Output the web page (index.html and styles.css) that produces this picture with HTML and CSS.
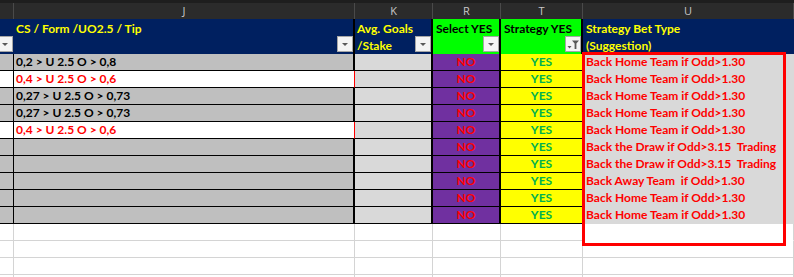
FILE: index.html
```html
<!DOCTYPE html>
<html lang="en">
<head>
    <meta charset="UTF-8">
    <title>Strategy Sheet</title>
    <link rel="stylesheet" href="styles.css">
</head>
<body>

<div class="sheet">
    <div class="topbar"></div>

    <!-- column letters -->
    <div class="row colhead">
        <div class="ch"></div>
        <div class="ch">J</div>
        <div class="ch">K</div>
        <div class="ch">R</div>
        <div class="ch">T</div>
        <div class="ch">U</div>
    </div>

    <!-- table header with filter buttons -->
    <div class="row head">
        <div class="hc navy first"><span class="filter"><svg width="14" height="14" viewBox="0 0 14 14"><path d="M4 6h6l-3 3z" fill="#595959"/></svg></span></div>
        <div class="hc navy thick">CS / Form /UO2.5 / Tip<span class="filter"><svg width="14" height="14" viewBox="0 0 14 14"><path d="M4 6h6l-3 3z" fill="#595959"/></svg></span></div>
        <div class="hc navy thick">Avg. Goals<br>/Stake<span class="filter"><svg width="14" height="14" viewBox="0 0 14 14"><path d="M4 6h6l-3 3z" fill="#595959"/></svg></span></div>
        <div class="hc green thick">Select YES<span class="filter"><svg width="14" height="14" viewBox="0 0 14 14"><path d="M4 6h6l-3 3z" fill="#595959"/></svg></span></div>
        <div class="hc green thick">Strategy YES<span class="filter"><svg width="14" height="14" viewBox="0 0 14 14"><path d="M1.5 9h4l-2 2.5z" fill="#595959"/><path d="M6 3.5h7l-2.6 3V12H8.6V6.5z" fill="#595959"/></svg></span></div>
        <div class="hc navy">Strategy Bet Type<br>(Suggestion)</div>
    </div>

    <!-- data rows -->
    <div class="row data">
        <div class="c idx"></div>
        <div class="c tip">0,2 &gt; U 2.5 O &gt; 0,8</div>
        <div class="c avg"></div>
        <div class="c sel">NO</div>
        <div class="c strat">YES</div>
        <div class="c bet">Back Home Team if Odd&gt;1.30</div>
    </div>
    <div class="row data alt">
        <div class="c idx"></div>
        <div class="c tip">0,4 &gt; U 2.5 O &gt; 0,6</div>
        <div class="c avg"></div>
        <div class="c sel">NO</div>
        <div class="c strat">YES</div>
        <div class="c bet">Back Home Team if Odd&gt;1.30</div>
    </div>
    <div class="row data">
        <div class="c idx"></div>
        <div class="c tip">0,27 &gt; U 2.5 O &gt; 0,73</div>
        <div class="c avg"></div>
        <div class="c sel">NO</div>
        <div class="c strat">YES</div>
        <div class="c bet">Back Home Team if Odd&gt;1.30</div>
    </div>
    <div class="row data">
        <div class="c idx"></div>
        <div class="c tip">0,27 &gt; U 2.5 O &gt; 0,73</div>
        <div class="c avg"></div>
        <div class="c sel">NO</div>
        <div class="c strat">YES</div>
        <div class="c bet">Back Home Team if Odd&gt;1.30</div>
    </div>
    <div class="row data alt">
        <div class="c idx"></div>
        <div class="c tip">0,4 &gt; U 2.5 O &gt; 0,6</div>
        <div class="c avg"></div>
        <div class="c sel">NO</div>
        <div class="c strat">YES</div>
        <div class="c bet">Back Home Team if Odd&gt;1.30</div>
    </div>
    <div class="row data">
        <div class="c idx"></div>
        <div class="c tip"></div>
        <div class="c avg"></div>
        <div class="c sel">NO</div>
        <div class="c strat">YES</div>
        <div class="c bet">Back the Draw if Odd&gt;3.15  Trading</div>
    </div>
    <div class="row data">
        <div class="c idx"></div>
        <div class="c tip"></div>
        <div class="c avg"></div>
        <div class="c sel">NO</div>
        <div class="c strat">YES</div>
        <div class="c bet">Back the Draw if Odd&gt;3.15  Trading</div>
    </div>
    <div class="row data">
        <div class="c idx"></div>
        <div class="c tip"></div>
        <div class="c avg"></div>
        <div class="c sel">NO</div>
        <div class="c strat">YES</div>
        <div class="c bet">Back Away Team  if Odd&gt;1.30</div>
    </div>
    <div class="row data">
        <div class="c idx"></div>
        <div class="c tip"></div>
        <div class="c avg"></div>
        <div class="c sel">NO</div>
        <div class="c strat">YES</div>
        <div class="c bet">Back Home Team if Odd&gt;1.30</div>
    </div>
    <div class="row data">
        <div class="c idx"></div>
        <div class="c tip"></div>
        <div class="c avg"></div>
        <div class="c sel">NO</div>
        <div class="c strat">YES</div>
        <div class="c bet">Back Home Team if Odd&gt;1.30</div>
    </div>

    <!-- empty grid below the table -->
    <div class="row blank">
        <div class="g"></div><div class="g"></div><div class="g"></div><div class="g"></div><div class="g"></div><div class="g open"></div>
    </div>
    <div class="row blank">
        <div class="g"></div><div class="g"></div><div class="g"></div><div class="g"></div><div class="g"></div><div class="g"></div>
    </div>
    <div class="row blank">
        <div class="g"></div><div class="g"></div><div class="g"></div><div class="g"></div><div class="g"></div><div class="g"></div>
    </div>
    <div class="row blank">
        <div class="g"></div><div class="g"></div><div class="g"></div><div class="g"></div><div class="g"></div><div class="g"></div>
    </div>

    <!-- highlight round the suggestion column -->
    <div class="pick-box"></div>
</div>

</body>
</html>
```

FILE: styles.css
```css
body {
    margin: 0;
    background: #ffffff;
    overflow: hidden;
    font-family: Lato, "Open Sans", sans-serif;
}
.sheet {
    position: relative;
    width: 794px;
    height: 277px;
    overflow: hidden;
}
.topbar {
    height: 3px;
    background: #1e1e1e;
}
.row {
    display: grid;
    grid-template-columns: 14px 341px 78px 68px 82px 211px;
}
.row > div {
    box-sizing: border-box;
    white-space: pre;
    overflow: visible;
}

/* column letters */
.colhead {
    height: 16px;
    background: #2b2b2b;
}
.ch {
    border-right: 1px solid #4a4a4a;
    color: #c8c8c8;
    font-family: "Open Sans", sans-serif;
    font-size: 11px;
    line-height: 16px;
    text-align: center;
}

/* header */
.head {
    height: 35px;
}
.hc {
    position: relative;
    padding: 1px 0 0 2px;
    font-size: 12px;
    font-weight: bold;
    line-height: 17px;
}
.navy {
    background: #002060;
    color: #ffff00;
}
.green {
    background: #00ff00;
    color: #000000;
}
.thick {
    border-right: 2px solid #000000;
}
.head .hc:nth-child(4),
.head .hc:nth-child(5),
.head .hc:nth-child(6) {
    padding-left: 3px;
}
.first {
    border-right: 1px solid #002060;
}
.filter {
    position: absolute;
    right: 0;
    bottom: 2px;
    width: 16px;
    height: 16px;
    box-sizing: border-box;
    border: 1px solid #a6a6a6;
    background: #f4f4f4;
}
.filter svg {
    display: block;
}

/* data rows */
.data {
    height: 17px;
}
.c {
    border-bottom: 1px solid #000000;
    font-size: 12px;
    font-weight: bold;
    line-height: 16px;
}
.idx {
    background: #bfbfbf;
    border-right: 1px solid #000000;
}
.tip {
    background: #bfbfbf;
    border-right: 2px solid #000000;
    padding-left: 2px;
    color: #000000;
}
.alt .idx,
.alt .tip {
    background: #ffffff;
}
.alt .tip {
    color: #ff0000;
    border-right: 1px solid #ff0000;
}
.avg {
    background: #d9d9d9;
    border-right: 2px solid #000000;
}
.sel {
    background: #7030a0;
    border-right: 2px solid #000000;
    color: #ff0000;
    text-align: center;
}
.strat {
    background: #ffff00;
    border-right: 1px solid #000000;
    color: #00b050;
    text-align: center;
}
.bet {
    background: #d9d9d9;
    border-bottom: none;
    padding-left: 3px;
    color: #ff0000;
}

/* empty cells */
.blank {
    height: 17px;
}
.g {
    border-right: 1px solid #d4d4d4;
    border-bottom: 1px solid #d4d4d4;
}
.g.open {
    border-bottom-color: #ffffff;
}

.pick-box {
    position: absolute;
    left: 582px;
    top: 52px;
    width: 204px;
    height: 194px;
    box-sizing: border-box;
    border: 3px solid #ff0000;
}
```
